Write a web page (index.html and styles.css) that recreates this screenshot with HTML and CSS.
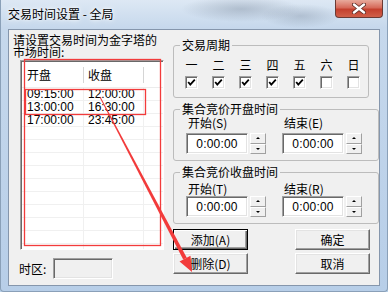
FILE: index.html
```html
<!DOCTYPE html>
<html lang="zh-CN">
<head>
    <meta charset="UTF-8">
    <title>交易时间设置 - 全局</title>
    <link rel="stylesheet" href="styles.css">
</head>
<body>
    <div class="window">
        <div class="titlebar">
            <span class="title">交易时间设置 - 全局</span>
            <button class="close-btn">
                <svg width="14" height="11" viewBox="0 0 14 11">
                    <path d="M2 1.5 L12 9.5 M12 1.5 L2 9.5" stroke="#5a2a24" stroke-width="4" stroke-linecap="round"/>
                    <path d="M2 1.5 L12 9.5 M12 1.5 L2 9.5" stroke="#fff" stroke-width="2.4" stroke-linecap="round"/>
                </svg>
            </button>
        </div>

        <div class="client">
            <div class="left-col">
                <p class="intro">请设置交易时间为金字塔的市场时间:</p>
                <div class="listview">
                    <div class="lv-header">
                        <span class="hd hd-open">开盘</span>
                        <span class="hd hd-close">收盘</span>
                    </div>
                    <div class="lv-body">
                        <div class="lv-row"><span class="c-open">09:15:00</span><span class="c-close">12:00:00</span></div>
                        <div class="lv-row"><span class="c-open">13:00:00</span><span class="c-close">16:30:00</span></div>
                        <div class="lv-row"><span class="c-open">17:00:00</span><span class="c-close">23:45:00</span></div>
                    </div>
                </div>
                <div class="tz-row">
                    <label class="tz-label">时区:</label>
                    <input class="tz-box" type="text" readonly>
                </div>
            </div>

            <div class="right-col">
                <fieldset class="group group-week">
                    <legend>交易周期</legend>
                    <div class="days">
                        <div class="day"><span class="day-name">一</span><span class="check"><svg width="11" height="11" viewBox="0 0 11 11"><path d="M2.2 5 L4.3 7.6 L8.8 2.6" fill="none" stroke="#000" stroke-width="1.8"/></svg></span></div>
                        <div class="day"><span class="day-name">二</span><span class="check"><svg width="11" height="11" viewBox="0 0 11 11"><path d="M2.2 5 L4.3 7.6 L8.8 2.6" fill="none" stroke="#000" stroke-width="1.8"/></svg></span></div>
                        <div class="day"><span class="day-name">三</span><span class="check"><svg width="11" height="11" viewBox="0 0 11 11"><path d="M2.2 5 L4.3 7.6 L8.8 2.6" fill="none" stroke="#000" stroke-width="1.8"/></svg></span></div>
                        <div class="day"><span class="day-name">四</span><span class="check"><svg width="11" height="11" viewBox="0 0 11 11"><path d="M2.2 5 L4.3 7.6 L8.8 2.6" fill="none" stroke="#000" stroke-width="1.8"/></svg></span></div>
                        <div class="day"><span class="day-name">五</span><span class="check"><svg width="11" height="11" viewBox="0 0 11 11"><path d="M2.2 5 L4.3 7.6 L8.8 2.6" fill="none" stroke="#000" stroke-width="1.8"/></svg></span></div>
                        <div class="day"><span class="day-name">六</span><span class="check"></span></div>
                        <div class="day"><span class="day-name">日</span><span class="check"></span></div>
                    </div>
                </fieldset>

                <fieldset class="group group-open">
                    <legend>集合竞价开盘时间</legend>
                    <div class="fields">
                        <div class="field">
                            <span class="field-label">开始(S)</span>
                            <div class="spin"><input class="spin-edit" type="text" value="0:00:00"><span class="spin-btns"><span class="spin-btn up"></span><span class="spin-btn down"></span></span></div>
                        </div>
                        <div class="field">
                            <span class="field-label">结束(E)</span>
                            <div class="spin"><input class="spin-edit" type="text" value="0:00:00"><span class="spin-btns"><span class="spin-btn up"></span><span class="spin-btn down"></span></span></div>
                        </div>
                    </div>
                </fieldset>

                <fieldset class="group group-close">
                    <legend>集合竞价收盘时间</legend>
                    <div class="fields">
                        <div class="field">
                            <span class="field-label">开始(T)</span>
                            <div class="spin"><input class="spin-edit" type="text" value="0:00:00"><span class="spin-btns"><span class="spin-btn up"></span><span class="spin-btn down"></span></span></div>
                        </div>
                        <div class="field">
                            <span class="field-label">结束(R)</span>
                            <div class="spin"><input class="spin-edit" type="text" value="0:00:00"><span class="spin-btns"><span class="spin-btn up"></span><span class="spin-btn down"></span></span></div>
                        </div>
                    </div>
                </fieldset>

                <div class="btn-row first">
                    <button class="btn btn-default">添加(A)</button>
                    <button class="btn">确定</button>
                </div>
                <div class="btn-row">
                    <button class="btn">删除(D)</button>
                    <button class="btn">取消</button>
                </div>
            </div>
        </div>
    </div>

    <!-- red annotation drawn over the dialog -->
    <svg class="marks" width="388" height="292" viewBox="0 0 388 292">
        <rect x="24.5" y="59.5" width="136" height="186" fill="none" stroke="#f23b3b" stroke-width="1.3"/>
        <rect x="25.5" y="89.5" width="120" height="25" fill="none" stroke="#f23b3b" stroke-width="1.3"/>
        <polygon points="99.6,97.2 100.4,96.8 186.8,257.8 183.2,259.6" fill="#f23b3b"/>
        <polygon points="179.5,261.6 190.5,255.8 192,272" fill="#f23b3b"/>
    </svg>
</body>
</html>
```

FILE: styles.css
```css
* {
    box-sizing: border-box;
}
body {
    margin: 0;
    width: 388px;
    height: 292px;
    overflow: hidden;
    position: relative;
    font-family: "Noto Sans CJK SC", sans-serif;
    font-size: 12px;
    color: #000;
    background: #b9d1ea;
}
.window {
    height: 292px;
    display: flex;
    flex-direction: column;
    border-left: 1px solid #8aa0b8;
    border-right: 1px solid #8aa0b8;
    border-bottom: 1px solid #8aa0b8;
    border-radius: 0 0 4px 4px;
    background:
        radial-gradient(ellipse 60px 13px at 240px 9px, rgba(105, 120, 140, 0.35), transparent),
        radial-gradient(ellipse 40px 12px at 300px 16px, rgba(105, 120, 140, 0.3), transparent),
        linear-gradient(#dde8f4, #c6d8ec 28px, #b7cee8);
}
.titlebar {
    height: 29px;
    display: flex;
    justify-content: space-between;
    align-items: flex-start;
}
.title {
    padding: 8px 0 0 7px;
    line-height: 12px;
    text-shadow: 0 0 6px #fff, 0 0 3px #fff;
}
.close-btn {
    width: 48px;
    height: 18px;
    margin-right: 4px;
    padding: 0;
    border: 1px solid #6b3a34;
    border-top: none;
    border-radius: 0 0 4px 4px;
    background: linear-gradient(#e8aa9c, #d66a5a 45%, #c4402e 55%, #d0604a);
    display: flex;
    align-items: center;
    justify-content: center;
}
.client {
    margin: 0 7px;
    height: 257px;
    border: 1px solid #8596ac;
    background: #f0f0f0;
    display: flex;
}

/* left side */
.left-col {
    width: 151px;
    margin-left: 4px;
    display: flex;
    flex-direction: column;
}
.intro {
    margin: 4px 0 0 0;
    line-height: 12px;
    width: 148px;
}
.listview {
    margin: 2px 0 0 7px;
    width: 144px;
    height: 190px;
    padding: 1px 0 0 1px;
    background: #fff;
    border: 1px solid;
    border-color: #a0a0a0 #fff #fff #a0a0a0;
    box-shadow: inset 1px 1px #696969;
    display: flex;
    flex-direction: column;
}
.lv-header {
    height: 26px;
    display: flex;
    align-items: center;
    border-bottom: 1px solid #ececec;
}
.hd {
    height: 16px;
    line-height: 16px;
    border-right: 1px solid #d5d5d5;
}
.hd-open {
    width: 62px;
    padding-left: 5px;
}
.hd-close {
    width: 60px;
    padding-left: 4px;
}
.lv-body {
    flex: 1;
    background:
        linear-gradient(to right, transparent 61px, #f0f0f0 61px 62px, transparent 62px 121px, #f0f0f0 121px 122px, transparent 122px),
        repeating-linear-gradient(to bottom, transparent 0 12px, #f0f0f0 12px 13px);
}
.lv-row {
    display: flex;
    height: 13px;
    line-height: 13px;
    font-family: "Liberation Sans", sans-serif;
    font-size: 12px;
}
.c-open {
    width: 62px;
    padding-left: 5px;
}
.c-close {
    width: 60px;
    padding-left: 4px;
}
.tz-row {
    margin-top: 8px;
    height: 21px;
    display: flex;
    align-items: center;
}
.tz-label {
    width: 34px;
    margin-left: 6px;
}
.tz-box {
    width: 60px;
    height: 21px;
    padding: 0;
    background: #f0f0f0;
    border: 1px solid;
    border-color: #a0a0a0 #fff #fff #a0a0a0;
    box-shadow: inset 1px 1px #696969, inset -1px -1px #e3e3e3;
}

/* right side */
.right-col {
    width: 197px;
    margin-left: 9px;
}
.group {
    margin: 5px 0 0 0;
    padding: 0;
    width: 196px;
    border: 1px solid #bcbcbc;
    border-radius: 3px;
}
.group legend {
    margin-left: 6px;
    padding: 0 2px;
    line-height: 12px;
}
.group-week {
    margin-top: 9px;
}
.days {
    display: grid;
    grid-template-columns: repeat(7, 27px);
    margin: 8px 0 8px 4px;
}
.day {
    display: flex;
    flex-direction: column;
    align-items: center;
}
.day-name {
    height: 12px;
    line-height: 12px;
}
.check {
    width: 13px;
    height: 13px;
    margin-top: 5px;
    background: #fff;
    border: 1px solid;
    border-color: #a0a0a0 #fff #fff #a0a0a0;
    box-shadow: inset 1px 1px #696969, inset -1px -1px #e3e3e3;
    display: flex;
}
.fields {
    display: grid;
    grid-template-columns: 96px 96px;
    margin: 2px 0 6px 12px;
}
.group-close .fields {
    margin-top: 5px;
}
.field-label {
    display: block;
    height: 12px;
    line-height: 12px;
    padding-left: 2px;
}
.spin {
    display: flex;
    gap: 2px;
    margin-top: 4px;
}
.group-close .spin {
    margin-top: 1px;
}
.spin-edit {
    width: 62px;
    height: 21px;
    padding: 0;
    text-align: center;
    font-family: "Liberation Sans", sans-serif;
    font-size: 12px;
    letter-spacing: 0.2px;
    background: #fff;
    border: 1px solid;
    border-color: #a0a0a0 #fff #fff #a0a0a0;
    box-shadow: inset 1px 1px #696969, inset -1px -1px #e3e3e3;
}
.spin-btns {
    width: 16px;
    height: 21px;
    display: flex;
    flex-direction: column;
}
.spin-btn {
    flex: 1;
    background: #f0f0f0;
    border: 1px solid;
    border-color: #fff #a0a0a0 #a0a0a0 #fff;
    display: flex;
    align-items: center;
    justify-content: center;
}
.spin-btn::before {
    content: "";
    border-left: 2px solid transparent;
    border-right: 2px solid transparent;
}
.spin-btn.up::before {
    border-bottom: 2px solid #000;
}
.spin-btn.down::before {
    border-top: 2px solid #000;
}
.btn-row {
    display: flex;
    justify-content: space-between;
    margin-top: 3px;
}
.btn-row.first {
    margin-top: 5px;
}
.btn {
    width: 75px;
    height: 21px;
    padding: 0;
    font-family: "Noto Sans CJK SC", sans-serif;
    font-size: 12px;
    line-height: 19px;
    color: #000;
    background: #f0f0f0;
    border: 1px solid;
    border-color: #fff #696969 #696969 #fff;
    box-shadow: inset -1px -1px #a0a0a0, inset 1px 1px #e3e3e3;
}
.btn-default {
    border-color: #000;
    box-shadow: inset 1px 1px #fff, inset -1px -1px #696969, inset -2px -2px #a0a0a0;
}

.marks {
    position: absolute;
    top: 0;
    left: 0;
    pointer-events: none;
}
```
